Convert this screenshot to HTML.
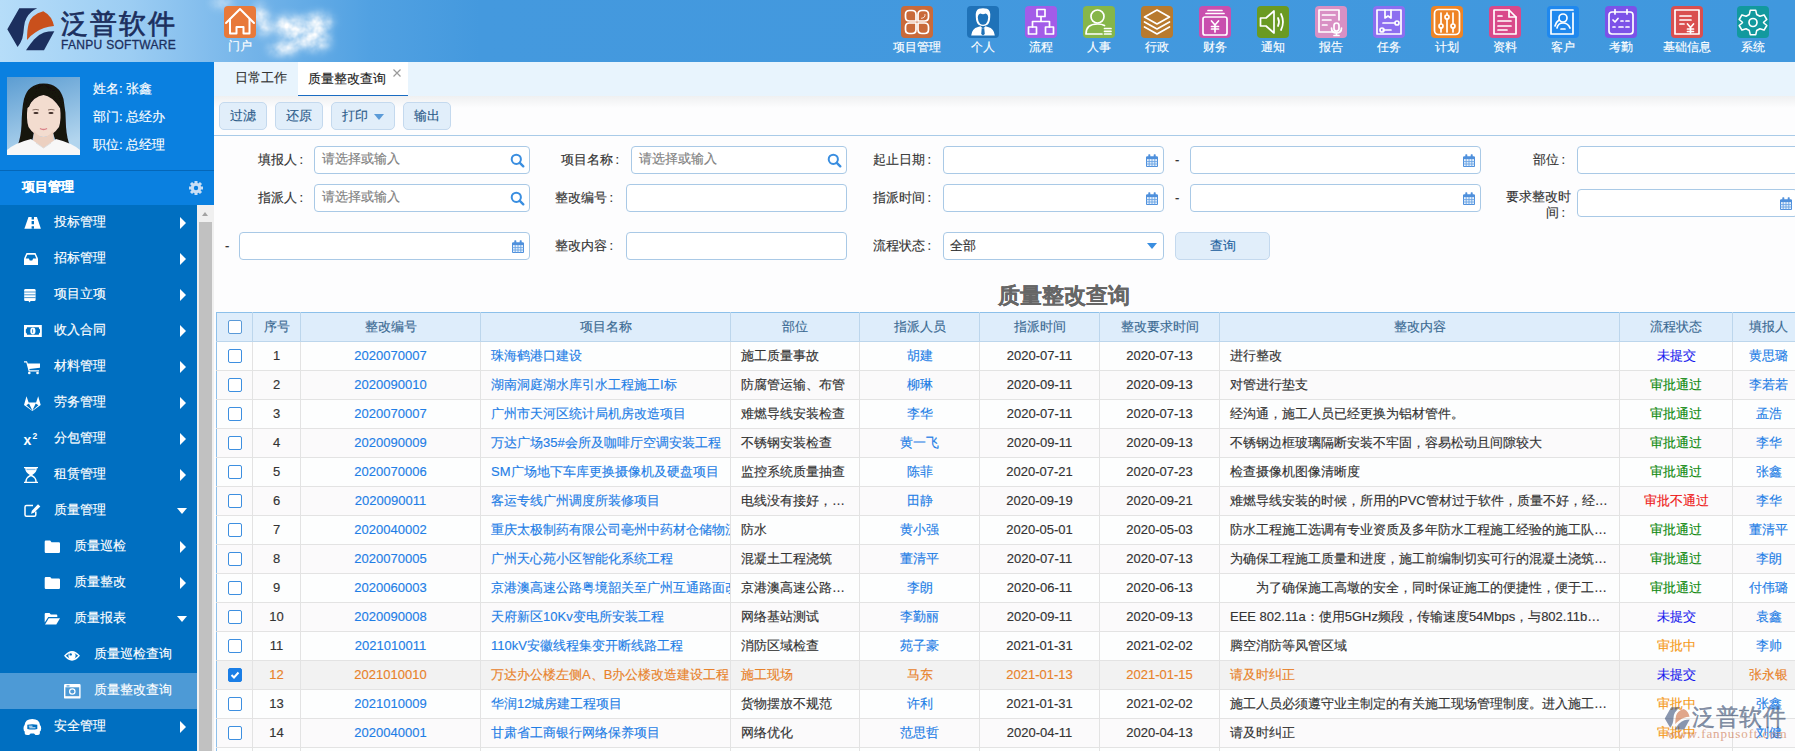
<!DOCTYPE html><html><head><meta charset="utf-8"><style>
*{box-sizing:border-box;margin:0;padding:0}
body{-webkit-text-stroke:0.15px currentColor}
html,body{width:1795px;height:751px;overflow:hidden;background:#fdfdfe;font-family:"Liberation Sans",sans-serif;font-size:13px;color:#333}
.a{position:absolute}
#hdr{left:0;top:0;width:1795px;height:62px;background:linear-gradient(90deg,#b6ddf9 0px,#9ccdf3 130px,#74b4e9 250px,#51a1e2 370px,#4499de 480px,#4098de 1795px)}
.nav{top:0;height:62px;text-align:center;color:#fff;font-size:12px}
.ico{position:absolute;top:6px;width:32px;height:32px;border-radius:4px}
.ico svg{position:absolute;left:0;top:0}
.nl{position:absolute;top:39px;white-space:nowrap;font-size:12px;line-height:16px;color:#fff;transform:translateX(-50%)}
#side{left:0;top:62px;width:214px;height:689px;background:#0a80e0}
.mi{position:absolute;left:0;width:197px;height:36px;color:#fff;font-size:13px;line-height:34px}
.mi .t{position:absolute;top:0}
.mi .ar{position:absolute;left:180px;top:12px;width:0;height:0;border-top:6px solid transparent;border-bottom:6px solid transparent;border-left:6px solid #fff}
.mi .dn{position:absolute;left:177px;top:15px;width:0;height:0;border-left:5px solid transparent;border-right:5px solid transparent;border-top:6px solid #fff}
.inp{position:absolute;height:28px;border:1px solid #a9c9e6;border-radius:4px;background:#fff}
.lbl{position:absolute;white-space:nowrap;font-size:13px;color:#333;line-height:28px;text-align:right}
.ph{position:absolute;left:6.5px;top:-1px;line-height:26px;color:#7f7f7f;font-size:13px}
.btn{position:absolute;top:102px;height:28px;border:1px solid #c4d9ee;border-radius:5px;background:#e1eefa;color:#2d5c8a;text-align:center;line-height:26px;font-size:13px}
table{border-collapse:collapse;table-layout:fixed}
#tbl{position:absolute;left:216px;top:312px;width:1588px;border-left:1px solid #8ec0ea}
#tbl td{background:#fdfefe}
#tbl tr:nth-child(odd) td{background:#fbfafb}
#tbl tr.sel td{background:#f2f2f2;color:#e8822a}
#tbl td:first-child,#tbl th:first-child{border-left-color:#8ec0ea}
#tbl td.pn{text-overflow:clip;padding-right:0}
#tbl td,#tbl th{height:29px;border:1px solid #e3e3e3;text-align:center;font-size:13px;white-space:nowrap;overflow:hidden;text-overflow:ellipsis;font-weight:normal;padding:0 10px 1px}
#tbl th{background:#deedfb;color:#3b6a93;border-color:#bcd6ec;border-top:1px solid #8cc0ea}
#tbl td.l{text-align:left}
.cb{display:inline-block;width:14px;height:14px;border:1px solid #3d8fe0;border-radius:2px;background:#fff;vertical-align:middle;position:relative;top:-1px}
.lk{color:#1f7ee6}
</style></head><body>
<div id="hdr" class="a">
<svg class="a" style="left:0;top:0" width="60" height="62" viewBox="0 0 60 62">
<path d="M19.3 8.3 L37.3 8.3 Q30 11.5 26.5 18 Q24.3 22 24 27 Q23.5 34 22.3 38.5 Q20.5 43.5 17.6 47 L7.3 29.3 Z" fill="#1c2f5e"/>
<path d="M27 40 Q27 30 28.6 24 Q30 19 33 16.5 Q37.5 12.5 43.3 11.3 Q48.5 14 51 18 Q53 21.5 54 26 Q48.5 26.3 44 28 Q39 29.8 35.3 32.5 Q30.5 35.5 27 40 Z" fill="#c9501c"/>
<path d="M26 50.3 Q30 44 34 39.5 Q38.5 34.5 44 32.6 Q48 31.3 54.3 31.3 L44 50.3 Z" fill="#1c2f5e"/>
</svg>
<div class="a" style="left:61px;top:6px;font-size:27px;line-height:36px;color:#1c2f5e;letter-spacing:2px;font-weight:normal;-webkit-text-stroke:0.7px #1c2f5e">泛普软件</div>
<div class="a" style="left:61px;top:39px;font-size:12px;line-height:13px;color:#1c2f5e;letter-spacing:0.3px;font-weight:normal;-webkit-text-stroke:0.3px #1c2f5e">FANPU SOFTWARE</div>
<svg class="a" style="left:205px;top:0" width="140" height="62" viewBox="205 0 140 62"><defs>
<filter id="bl" x="-50%" y="-50%" width="200%" height="200%"><feTurbulence type="fractalNoise" baseFrequency="0.09" numOctaves="3" seed="11" result="n0"/><feGaussianBlur in="n0" stdDeviation="0.6" result="n1"/><feColorMatrix in="n1" type="matrix" values="0 0 0 0 0  0 0 0 0 0  0 0 0 0 0  1 0 0 0 0" result="n"/><feGaussianBlur in="SourceGraphic" stdDeviation="4" result="b"/><feComposite in="n" in2="b" operator="arithmetic" k1="1.0" k2="0" k3="0.22" k4="0" result="m"/><feColorMatrix in="m" type="matrix" values="0 0 0 0 1  0 0 0 0 1  0 0 0 0 1  0 0 0 1 0"/></filter></defs>
<g filter="url(#bl)" fill="#fff">
<ellipse cx="262" cy="20" rx="7" ry="17" transform="rotate(-15 262 20)"/>
<ellipse cx="222" cy="3" rx="10" ry="5" opacity="0.7"/>
<ellipse cx="302" cy="33" rx="30" ry="14" transform="rotate(22 302 33)"/>
<ellipse cx="318" cy="22" rx="15" ry="9"/>
<ellipse cx="283" cy="49" rx="15" ry="6"/>
</g></svg>
<div class="a" style="left:224px;top:6px;width:32px;height:32px;border-radius:4px;background:#e8793a"><svg width="32" height="32" viewBox="0 0 32 32" fill="none" stroke="#fff" stroke-width="2" stroke-linejoin="round" stroke-linecap="round"><path d="M2 17 L16 3 L30 17"/><path d="M6 13 V27.5 H12.5 V21 H19.5 V27.5 H25.5 V13"/></svg></div>
<div class="a" style="left:228px;top:38px;font-size:12px;line-height:16px;color:#fff">门户</div>
<div class="ico" style="left:901px;background:#c96a3a"><svg width="32" height="32" viewBox="0 0 32 32"><g fill="none" stroke="#fff" stroke-width="1.7" stroke-linecap="round" stroke-linejoin="round"><path d="M15 15H8.5Q4.5 15 4.5 11V8.5Q4.5 4.5 8.5 4.5H11Q15 4.5 15 8.5Z"/><path d="M17 15H23.5Q27.5 15 27.5 11V8.5Q27.5 4.5 23.5 4.5H21Q17 4.5 17 8.5Z"/><path d="M15 17H8.5Q4.5 17 4.5 21V23.5Q4.5 27.5 8.5 27.5H11Q15 27.5 15 23.5Z"/><path d="M17 17H23.5Q27.5 17 27.5 21V23.5Q27.5 27.5 23.5 27.5H21Q17 27.5 17 23.5Z"/><path d="M24 8.5Q24.5 12 20.5 12.3" stroke-width="0.8"/></g></svg></div>
<div class="nl" style="left:917px">项目管理</div>
<div class="ico" style="left:967px;background:#1f72b8"><svg width="32" height="32" viewBox="0 0 32 32"><g fill="#fff"><path d="M8.8 11 Q8.2 4 12 2.8 Q16 1.5 20 2.8 Q23.8 4 23.2 11 Q23 16.5 20.5 18.8 Q18 20 16 20 Q14 20 11.5 18.8 Q9 16.5 8.8 11Z"/><path d="M4.2 29.6 Q4.8 22.5 11 21 L13.5 20.3 L16 22.5 L18.5 20.3 L21 21 Q27.2 22.5 27.8 29.6Z"/></g><path d="M10.8 11.5 Q11 8 13.5 7.5 Q16 9 18.5 7.5 Q21 8 21.2 11.5 Q21 16 19 17.8 Q17.5 18.8 16 18.8 Q14.5 18.8 13 17.8 Q11 16 10.8 11.5Z" fill="#1f72b8"/><path d="M14.8 21.5 L16 22.8 L17.2 21.5 L17.8 28 L16 29.6 L14.2 28Z" fill="#1f72b8"/></svg></div>
<div class="nl" style="left:983px">个人</div>
<div class="ico" style="left:1025px;background:#a35ce8"><svg width="32" height="32" viewBox="0 0 32 32"><g fill="none" stroke="#fff" stroke-width="1.7" stroke-linecap="round" stroke-linejoin="round"><rect x="12" y="3.5" width="8" height="7"/><rect x="3.5" y="21" width="8" height="7"/><rect x="20.5" y="21" width="8" height="7"/><path d="M16 10.5V15.5M7.5 21V15.5H24.5V21"/></g></svg></div>
<div class="nl" style="left:1041px">流程</div>
<div class="ico" style="left:1083px;background:#86b64a"><svg width="32" height="32" viewBox="0 0 32 32"><g fill="none" stroke="#fff" stroke-width="1.7" stroke-linecap="round" stroke-linejoin="round"><circle cx="14.5" cy="10.5" r="6.5"/><path d="M3 28 Q3 18 14.5 18 Q19 18 21.5 19.5M3 28H19"/><path d="M21.5 22.5H28M21.5 25.3H28M21.5 28H28"/></g></svg></div>
<div class="nl" style="left:1099px">人事</div>
<div class="ico" style="left:1141px;background:#b87a2e"><svg width="32" height="32" viewBox="0 0 32 32"><g fill="none" stroke="#fff" stroke-width="1.7" stroke-linecap="round" stroke-linejoin="round"><path d="M16 4 L28.5 11 L16 18 L3.5 11Z"/><path d="M3.5 16 L16 23 L28.5 16"/><path d="M3.5 21 L16 28 L28.5 21"/></g></svg></div>
<div class="nl" style="left:1157px">行政</div>
<div class="ico" style="left:1199px;background:#c94fae"><svg width="32" height="32" viewBox="0 0 32 32"><g fill="none" stroke="#fff" stroke-width="1.7" stroke-linecap="round" stroke-linejoin="round"><rect x="4" y="11" width="24" height="18" rx="2"/><path d="M7 7.5H25M9 4.5H23"/><path d="M12.5 15L16 19L19.5 15M16 19V26M12.5 20.5H19.5M12.5 23H19.5"/></g></svg></div>
<div class="nl" style="left:1215px">财务</div>
<div class="ico" style="left:1257px;background:#6a9a22"><svg width="32" height="32" viewBox="0 0 32 32"><g fill="none" stroke="#fff" stroke-width="1.7" stroke-linecap="round" stroke-linejoin="round"><path d="M3.5 12H9L17 5V27L9 20H3.5Z"/><path d="M21 12Q23 16 21 20M24 8Q28 16 24 24"/></g></svg></div>
<div class="nl" style="left:1273px">通知</div>
<div class="ico" style="left:1315px;background:#d990c4"><svg width="32" height="32" viewBox="0 0 32 32"><g fill="none" stroke="#fff" stroke-width="1.7" stroke-linecap="round" stroke-linejoin="round"><path d="M22 26H4V4H24V14"/><path d="M7.5 9H20M7.5 14H16M7.5 19H12"/><rect x="19" y="17" width="5" height="8" rx="2.5"/><path d="M16.5 22Q16.5 27 21.5 27Q26.5 27 26.5 22M21.5 27V29.5M19 29.5H24"/></g></svg></div>
<div class="nl" style="left:1331px">报告</div>
<div class="ico" style="left:1373px;background:#8d6ff0"><svg width="32" height="32" viewBox="0 0 32 32"><g fill="none" stroke="#fff" stroke-width="1.7" stroke-linecap="round" stroke-linejoin="round"><rect x="4" y="4" width="24" height="24"/><path d="M12 4V12L15 10L18 12V4"/><path d="M10 17H22M10 24H18"/><circle cx="24" cy="17" r="2"/><circle cx="9" cy="24" r="2"/></g></svg></div>
<div class="nl" style="left:1389px">任务</div>
<div class="ico" style="left:1431px;background:#ee8426"><svg width="32" height="32" viewBox="0 0 32 32"><g fill="none" stroke="#fff" stroke-width="1.7" stroke-linecap="round" stroke-linejoin="round"><rect x="3.5" y="3.5" width="25" height="25" rx="4"/><path d="M10 7V26M16 7V26M22 7V26"/><circle cx="10" cy="20" r="2" fill="#ee8426"/><circle cx="16" cy="11" r="2" fill="#ee8426"/><circle cx="22" cy="20" r="2" fill="#ee8426"/></g></svg></div>
<div class="nl" style="left:1447px">计划</div>
<div class="ico" style="left:1489px;background:#d9498a"><svg width="32" height="32" viewBox="0 0 32 32"><g fill="none" stroke="#fff" stroke-width="1.7" stroke-linecap="round" stroke-linejoin="round"><path d="M5 4H20L27 11V28H5Z"/><path d="M20 4V11H27"/><path d="M9 10H13M9 15H22M9 20H22M9 24H18"/></g></svg></div>
<div class="nl" style="left:1505px">资料</div>
<div class="ico" style="left:1547px;background:#1f88ee"><svg width="32" height="32" viewBox="0 0 32 32"><g fill="none" stroke="#fff" stroke-width="1.7" stroke-linecap="round" stroke-linejoin="round"><path d="M26 4H4V28H26V7"/><circle cx="16" cy="12" r="4"/><path d="M10 22Q11 17 16 17Q21 17 23 22M12 14Q9 16 8 20M14 23H18"/></g></svg></div>
<div class="nl" style="left:1563px">客户</div>
<div class="ico" style="left:1605px;background:#7c52e8"><svg width="32" height="32" viewBox="0 0 32 32"><g fill="none" stroke="#fff" stroke-width="1.7" stroke-linecap="round" stroke-linejoin="round"><rect x="4" y="6" width="24" height="22" rx="3"/><path d="M10 3.5V8M22 3.5V8"/><path d="M8 14L10 16L13 12.5M16 15H18M21 15H24M8 21H10M14 21H18M21 21H24"/></g></svg></div>
<div class="nl" style="left:1621px">考勤</div>
<div class="ico" style="left:1671px;background:#d94f4f"><svg width="32" height="32" viewBox="0 0 32 32"><g fill="none" stroke="#fff" stroke-width="1.7" stroke-linecap="round" stroke-linejoin="round"><rect x="4" y="4" width="24" height="24"/><path d="M9 10H20M9 14H20M9 18H13"/><path d="M16.5 18L19.5 21.5L22.5 18M19.5 21.5V27M16.5 23H22.5M16.5 25.5H22.5"/></g></svg></div>
<div class="nl" style="left:1687px">基础信息</div>
<div class="ico" style="left:1737px;background:#12999e"><svg width="32" height="32" viewBox="0 0 32 32"><g fill="none" stroke="#fff" stroke-width="1.7" stroke-linecap="round" stroke-linejoin="round"><path d="M13 3.5H19L20 8L23.5 10L28 8.5L31 13.5L27.5 16.5V17L31 20L28 25L23.5 23.5L20 25.5L19 30H13L12 25.5L8.5 23.5L4 25L1 20L4.5 17V16.5L1 13.5L4 8.5L8.5 10L12 8Z" transform="translate(16 16.5) scale(0.92) translate(-16 -16.75)"/><circle cx="16" cy="16.5" r="4"/></g></svg></div>
<div class="nl" style="left:1753px">系统</div>
</div>
<div id="side" class="a">
<svg class="a" style="left:7px;top:15px" width="73" height="78" viewBox="0 0 73 78" preserveAspectRatio="none">
<defs><linearGradient id="pg" x1="0" y1="0" x2="0.3" y2="1"><stop offset="0" stop-color="#5c9dd2"/><stop offset="1" stop-color="#b2d5ee"/></linearGradient>
<filter id="pb" x="-10%" y="-10%" width="120%" height="120%"><feGaussianBlur stdDeviation="0.6"/></filter></defs>
<rect width="73" height="78" fill="url(#pg)"/>
<g filter="url(#pb)">
<path d="M36 6.5 Q52 6 56.5 22 Q59 35 59 50 Q60 62 63 69 L50 68 L46 56 L27 56 L24 68 L10.5 69 Q14 60 14.5 48 Q15 30 17 22 Q21 7 36 6.5Z" fill="#161210"/>
<path d="M36.5 18 Q45 19 53 31 Q54.5 42 52 50 Q46 59 36.5 60 Q27 59 21.5 50 Q19 42 20.5 31 Q27 19 36.5 18Z" fill="#f3dccf"/>
<path d="M36.3 7.5 Q30 10 22 30 L19 31 Q20 14 36.3 7.5Z M36.8 7.5 Q44 10 53 31 L55 31 Q53 14 36.8 7.5Z" fill="#161210"/>
<path d="M27 54 Q32 60 36.5 60 Q41 60 46 54 L47 64 L36.5 72 L26 64Z" fill="#ecd0c0"/>
<path d="M0 78 L0 73 Q8 66 24 62 L36.5 71 L49 62 Q65 66 73 73 L73 78Z" fill="#f7f7f7"/>
<path d="M29 66 L36.5 71 L44 66" fill="none" stroke="#d8d8d8" stroke-width="0.8"/>
<ellipse cx="29" cy="36" rx="2.6" ry="1.1" fill="#3a2a24"/><ellipse cx="44" cy="36" rx="2.6" ry="1.1" fill="#3a2a24"/>
<path d="M25.5 33 Q29 31.8 32 33 M41 33 Q44 31.8 47.5 33" stroke="#5a4034" stroke-width="0.7" fill="none"/>
<path d="M33 51.5 Q36.5 53.5 40 51.5" stroke="#d97f86" stroke-width="1.4" fill="none"/>
</g>
</svg>
<div class="a" style="left:93px;top:17px;color:#fff;font-size:13px;line-height:20px">姓名: 张鑫</div>
<div class="a" style="left:93px;top:45px;color:#fff;font-size:13px;line-height:20px">部门: 总经办</div>
<div class="a" style="left:93px;top:73px;color:#fff;font-size:13px;line-height:20px">职位: 总经理</div>
<div class="a" style="left:0;top:108px;width:214px;height:1px;background:#0567b8"></div>
<div class="a" style="left:22px;top:116px;color:#fff;font-size:13px;line-height:18px;font-weight:bold">项目管理</div>
<svg class="a" style="left:188px;top:118px" width="16" height="16" viewBox="0 0 16 16"><g fill="#c8def5"><circle cx="8" cy="8" r="5.2"/><g stroke="#c8def5" stroke-width="3">
<path d="M8 1V15M1 8H15M3 3L13 13M13 3L3 13"/></g></g><circle cx="8" cy="8" r="2.2" fill="#0a80e0"/></svg>
<div class="a" style="left:0;top:143px;width:197px;height:546px;background:#006fc1"></div>
<div class="a" style="left:197px;top:143px;width:17px;height:546px;background:#f0f0f0"></div>
<div class="a" style="left:201.5px;top:150px;width:0;height:0;border-left:3.5px solid transparent;border-right:3.5px solid transparent;border-bottom:4px solid #a3a3a3"></div>
<div class="a" style="left:199px;top:160px;width:13px;height:529px;background:#c1c1c1"></div>
<div class="mi" style="top:143px;"><span class="t" style="left:54px">投标管理</span>
<i class="ar"></i>
</div>
<div class="mi" style="top:179px;"><span class="t" style="left:54px">招标管理</span>
<i class="ar"></i>
</div>
<div class="mi" style="top:215px;"><span class="t" style="left:54px">项目立项</span>
<i class="ar"></i>
</div>
<div class="mi" style="top:251px;"><span class="t" style="left:54px">收入合同</span>
<i class="ar"></i>
</div>
<div class="mi" style="top:287px;"><span class="t" style="left:54px">材料管理</span>
<i class="ar"></i>
</div>
<div class="mi" style="top:323px;"><span class="t" style="left:54px">劳务管理</span>
<i class="ar"></i>
</div>
<div class="mi" style="top:359px;"><span class="t" style="left:54px">分包管理</span>
<i class="ar"></i>
</div>
<div class="mi" style="top:395px;"><span class="t" style="left:54px">租赁管理</span>
<i class="ar"></i>
</div>
<div class="mi" style="top:431px;"><span class="t" style="left:54px">质量管理</span>
<i class="dn"></i>
</div>
<div class="mi" style="top:467px;"><span class="t" style="left:74px">质量巡检</span>
<i class="ar"></i>
</div>
<div class="mi" style="top:503px;"><span class="t" style="left:74px">质量整改</span>
<i class="ar"></i>
</div>
<div class="mi" style="top:539px;"><span class="t" style="left:74px">质量报表</span>
<i class="dn"></i>
</div>
<div class="mi" style="top:575px;"><span class="t" style="left:94px">质量巡检查询</span>
</div>
<div class="mi" style="top:611px;background:#4d9ad6;"><span class="t" style="left:94px">质量整改查询</span>
</div>
<div class="mi" style="top:647px;"><span class="t" style="left:54px">安全管理</span>
<i class="ar"></i>
</div>
<svg class="a" style="left:0;top:-62px" width="197" height="813" viewBox="0 0 197 813"><path d="M28.5 217H36.9L40.9 228.7H24.4Z" fill="#fff"/><path d="M31.6 217H34V219.5H31.6ZM31.6 221H34V224.3H31.6ZM31.6 226.3H34V228.7H31.6Z" fill="#0070c1"/><path d="M26.5 253H35.5L38 258.5V265H24V258.5Z" fill="#fff"/><path d="M27.3 254.8H34.7L36.3 258.6H33.2L32.2 260.5H29.8L28.8 258.6H25.7Z" fill="#0070c1"/><rect x="24.2" y="289" width="11.4" height="12" rx="1.3" fill="#fff"/><path d="M24.2 292H35.6M24.2 294.8H35.6M24.2 297.6H35.6" stroke="#0070c1" stroke-width="0.7"/><path d="M28.5 300.8H31L29.2 302.6Z" fill="#fff"/><rect x="24" y="325" width="17.8" height="12" fill="#fff"/><path d="M27 327.2H38.8Q38.8 329 40 329.5V332.5Q38.8 333 38.8 334.8H27Q27 333 25.8 332.5V329.5Q27 329 27 327.2Z" fill="#0070c1"/><ellipse cx="32.9" cy="331" rx="2.6" ry="3.4" fill="#fff"/><path d="M32.6 329.3V332.8" stroke="#0070c1" stroke-width="0.8"/><path d="M24 361.3H27L27.8 363.5H40V367.8L29.3 369L29.7 370.3H39V371.5H28.7L26.3 362.5H24Z" fill="#fff"/><circle cx="29.3" cy="373" r="1.3" fill="#fff"/><circle cx="37.5" cy="373" r="1.3" fill="#fff"/><path d="M24 405L26.5 396.3L28.6 402.5H36.1L38.2 396.3L40.7 405L32.35 411Z" fill="#fff"/><path d="M26.3 405.3L29 403.6L32.35 410.5ZM38.4 405.3L35.7 403.6L32.35 410.5Z" fill="#0070c1"/><text x="23.5" y="445" font-family="Liberation Sans" font-weight="bold" font-size="14" fill="#fff">x</text><text x="32.5" y="439" font-family="Liberation Sans" font-weight="bold" font-size="8.5" fill="#fff">2</text><path d="M24 467H38V468.3H36.8Q36.8 472.5 32.2 475Q36.8 477.5 36.8 481.7H38V483H24V481.7H25.2Q25.2 477.5 29.8 475Q25.2 472.5 25.2 468.3H24Z" fill="#fff"/><path d="M26.7 481.7Q26.7 477.8 31 476.3Q35.3 477.8 35.3 481.7Z" fill="#0070c1"/><rect x="26.5" y="468.8" width="9" height="1.3" fill="#8cc0ea"/><path d="M33 505.5H26.5Q25 505.5 25 507V514.8Q25 516.3 26.5 516.3H34.3Q35.8 516.3 35.8 514.8V511.5" fill="none" stroke="#fff" stroke-width="1.5"/><path d="M38 504.2L40.3 506.5L34 512.8L31 513.7L31.9 510.7Z" fill="#fff"/><path d="M44.7 541.8Q44.7 540.6 45.9 540.6H50.2L51.5 542.2H58.8Q60 542.2 60 543.4V551.8Q60 553 58.8 553H45.9Q44.7 553 44.7 551.8Z" fill="#fff"/><path d="M44.7 578.2Q44.7 577 45.9 577H50.2L51.5 578.6H58.8Q60 578.6 60 579.8V587.8Q60 589 58.8 589H45.9Q44.7 589 44.7 587.8Z" fill="#fff"/><path d="M44.7 614Q44.7 613 45.7 613H49.5L50.8 614.5H56.3Q57.3 614.5 57.3 615.5V617H48.3L44.7 622.5Z" fill="#fff"/><path d="M48.8 618.2H60L56.3 624.4H45Z" fill="#fff"/><path d="M64 655.75Q72 646 80 655.75Q72 665.5 64 655.75Z" fill="#fff"/><path d="M65.8 655.75Q72 649.5 78.2 655.75Q72 662 65.8 655.75Z" fill="#0070c1"/><circle cx="72" cy="655.75" r="3.6" fill="#fff"/><circle cx="70.7" cy="654.4" r="1.2" fill="#0070c1"/><rect x="64.7" y="684.7" width="15.2" height="13.2" rx="0.5" fill="none" stroke="#fff" stroke-width="1.4"/><rect x="64.7" y="684.7" width="15.2" height="2.6" fill="#fff"/><rect x="66.5" y="685.3" width="3" height="1.2" fill="#4d9ad6"/><rect x="64.7" y="696.2" width="15.2" height="1.7" fill="#fff"/><circle cx="72.3" cy="691.5" r="2.7" fill="none" stroke="#fff" stroke-width="1.2"/><path d="M32.3 719Q39.5 719 40 725Q41.3 726 41.2 728.5Q41 731 39.8 731.5Q40.5 735 37.5 735H35.5L34 733.6H30.6L29.1 735H27.1Q24.1 735 24.8 731.5Q23.6 731 23.5 728.5Q23.4 726 24.6 725Q25.1 719 32.3 719Z" fill="#fff"/><path d="M27.3 724.8Q32.3 723.8 37.3 724.8V729Q32.3 730 27.3 729Z" fill="#0070c1"/><path d="M28.8 726.2H32.5M29.3 727.8H35.5" stroke="#fff" stroke-width="0.9"/></svg>
</div>
<div class="a" style="left:214px;top:62px;width:1581px;height:34px;background:#e8f4fd"></div>
<div class="a" style="left:298px;top:62px;width:110px;height:34px;background:#fff;border-bottom:1px solid #1a6cc2"></div>
<div class="a" style="left:235px;top:69px;font-size:13px;line-height:18px;color:#333">日常工作</div>
<div class="a" style="left:308px;top:69.5px;font-size:13px;line-height:18px;color:#222">质量整改查询</div>
<svg class="a" style="left:392px;top:68px" width="10" height="10" viewBox="0 0 10 10"><path d="M1.5 1.5L8.5 8.5M8.5 1.5L1.5 8.5" stroke="#9a9a9a" stroke-width="1.2"/></svg>
<div class="a" style="left:214px;top:96px;width:1581px;height:39px;background:linear-gradient(#eff0f1,#fdfdfe 12px,#fdfdfe)"></div>
<div class="a" style="left:214px;top:135px;width:1581px;height:1px;background:#a9cbe8"></div>
<div class="btn" style="left:219px;width:48px">过滤</div>
<div class="btn" style="left:275px;width:48px">还原</div>
<div class="btn" style="left:331px;width:64px;text-align:left;padding-left:10px">打印<i class="a" style="left:42px;top:11px;width:0;height:0;border-left:5px solid transparent;border-right:5px solid transparent;border-top:6px solid #5b9bd8"></i></div>
<div class="btn" style="left:403px;width:48px">输出</div>
<div class="lbl" style="right:1492px;top:146px">填报人<span style="margin-left:2px">:</span></div>
<div class="inp" style="left:314px;top:146px;width:216px"><span class="ph">请选择或输入</span><svg class="a" style="right:4px;top:6px" width="15" height="15" viewBox="0 0 15 15"><circle cx="6.3" cy="6.3" r="4.6" fill="none" stroke="#3a8ee0" stroke-width="2"/><path d="M9.8 9.8L13.3 13.3" stroke="#3a8ee0" stroke-width="2.4" stroke-linecap="round"/></svg></div>
<div class="lbl" style="right:1176px;top:146px">项目名称<span style="margin-left:2px">:</span></div>
<div class="inp" style="left:631px;top:146px;width:216px"><span class="ph">请选择或输入</span><svg class="a" style="right:4px;top:6px" width="15" height="15" viewBox="0 0 15 15"><circle cx="6.3" cy="6.3" r="4.6" fill="none" stroke="#3a8ee0" stroke-width="2"/><path d="M9.8 9.8L13.3 13.3" stroke="#3a8ee0" stroke-width="2.4" stroke-linecap="round"/></svg></div>
<div class="lbl" style="right:864px;top:146px">起止日期<span style="margin-left:2px">:</span></div>
<div class="inp" style="left:943px;top:146px;width:221px"><svg class="a" style="right:5px;top:7px" width="12" height="13" viewBox="0 0 12 13"><path d="M0.5 3H11.5V12.5H0.5Z" fill="#e6f0fb" stroke="#4f90dc"/><rect x="0.5" y="2.5" width="11" height="2.6" fill="#4f90dc"/><rect x="2.3" y="0.3" width="2" height="3" rx="0.6" fill="#4f90dc"/><rect x="7.7" y="0.3" width="2" height="3" rx="0.6" fill="#4f90dc"/><path d="M0.5 7.6H11.5M0.5 10H11.5M3.2 5V12.5M6 5V12.5M8.8 5V12.5" stroke="#6aa4e4" stroke-width="0.9"/></svg></div>
<div class="a" style="left:1175px;top:146px;line-height:28px">-</div>
<div class="inp" style="left:1190px;top:146px;width:291px"><svg class="a" style="right:5px;top:7px" width="12" height="13" viewBox="0 0 12 13"><path d="M0.5 3H11.5V12.5H0.5Z" fill="#e6f0fb" stroke="#4f90dc"/><rect x="0.5" y="2.5" width="11" height="2.6" fill="#4f90dc"/><rect x="2.3" y="0.3" width="2" height="3" rx="0.6" fill="#4f90dc"/><rect x="7.7" y="0.3" width="2" height="3" rx="0.6" fill="#4f90dc"/><path d="M0.5 7.6H11.5M0.5 10H11.5M3.2 5V12.5M6 5V12.5M8.8 5V12.5" stroke="#6aa4e4" stroke-width="0.9"/></svg></div>
<div class="lbl" style="right:230px;top:146px">部位<span style="margin-left:2px">:</span></div>
<div class="inp" style="left:1577px;top:146px;width:230px"></div>
<div class="lbl" style="right:1492px;top:184px">指派人<span style="margin-left:2px">:</span></div>
<div class="inp" style="left:314px;top:184px;width:216px"><span class="ph">请选择或输入</span><svg class="a" style="right:4px;top:6px" width="15" height="15" viewBox="0 0 15 15"><circle cx="6.3" cy="6.3" r="4.6" fill="none" stroke="#3a8ee0" stroke-width="2"/><path d="M9.8 9.8L13.3 13.3" stroke="#3a8ee0" stroke-width="2.4" stroke-linecap="round"/></svg></div>
<div class="lbl" style="right:1182px;top:184px">整改编号<span style="margin-left:2px">:</span></div>
<div class="inp" style="left:626px;top:184px;width:221px"></div>
<div class="lbl" style="right:864px;top:184px">指派时间<span style="margin-left:2px">:</span></div>
<div class="inp" style="left:943px;top:184px;width:221px"><svg class="a" style="right:5px;top:7px" width="12" height="13" viewBox="0 0 12 13"><path d="M0.5 3H11.5V12.5H0.5Z" fill="#e6f0fb" stroke="#4f90dc"/><rect x="0.5" y="2.5" width="11" height="2.6" fill="#4f90dc"/><rect x="2.3" y="0.3" width="2" height="3" rx="0.6" fill="#4f90dc"/><rect x="7.7" y="0.3" width="2" height="3" rx="0.6" fill="#4f90dc"/><path d="M0.5 7.6H11.5M0.5 10H11.5M3.2 5V12.5M6 5V12.5M8.8 5V12.5" stroke="#6aa4e4" stroke-width="0.9"/></svg></div>
<div class="a" style="left:1175px;top:184px;line-height:28px">-</div>
<div class="inp" style="left:1190px;top:184px;width:291px"><svg class="a" style="right:5px;top:7px" width="12" height="13" viewBox="0 0 12 13"><path d="M0.5 3H11.5V12.5H0.5Z" fill="#e6f0fb" stroke="#4f90dc"/><rect x="0.5" y="2.5" width="11" height="2.6" fill="#4f90dc"/><rect x="2.3" y="0.3" width="2" height="3" rx="0.6" fill="#4f90dc"/><rect x="7.7" y="0.3" width="2" height="3" rx="0.6" fill="#4f90dc"/><path d="M0.5 7.6H11.5M0.5 10H11.5M3.2 5V12.5M6 5V12.5M8.8 5V12.5" stroke="#6aa4e4" stroke-width="0.9"/></svg></div>
<div class="a" style="left:1506px;top:189px;line-height:16px;font-size:13px;color:#333">要求整改时</div>
<div class="a" style="right:230px;top:205px;line-height:16px;font-size:13px;color:#333">间<span style="margin-left:2px">:</span></div>
<div class="inp" style="left:1577px;top:189px;width:221px"><svg class="a" style="right:5px;top:7px" width="12" height="13" viewBox="0 0 12 13"><path d="M0.5 3H11.5V12.5H0.5Z" fill="#e6f0fb" stroke="#4f90dc"/><rect x="0.5" y="2.5" width="11" height="2.6" fill="#4f90dc"/><rect x="2.3" y="0.3" width="2" height="3" rx="0.6" fill="#4f90dc"/><rect x="7.7" y="0.3" width="2" height="3" rx="0.6" fill="#4f90dc"/><path d="M0.5 7.6H11.5M0.5 10H11.5M3.2 5V12.5M6 5V12.5M8.8 5V12.5" stroke="#6aa4e4" stroke-width="0.9"/></svg></div>
<div class="a" style="left:225px;top:232px;line-height:28px">-</div>
<div class="inp" style="left:239px;top:232px;width:291px"><svg class="a" style="right:5px;top:7px" width="12" height="13" viewBox="0 0 12 13"><path d="M0.5 3H11.5V12.5H0.5Z" fill="#e6f0fb" stroke="#4f90dc"/><rect x="0.5" y="2.5" width="11" height="2.6" fill="#4f90dc"/><rect x="2.3" y="0.3" width="2" height="3" rx="0.6" fill="#4f90dc"/><rect x="7.7" y="0.3" width="2" height="3" rx="0.6" fill="#4f90dc"/><path d="M0.5 7.6H11.5M0.5 10H11.5M3.2 5V12.5M6 5V12.5M8.8 5V12.5" stroke="#6aa4e4" stroke-width="0.9"/></svg></div>
<div class="lbl" style="right:1182px;top:232px">整改内容<span style="margin-left:2px">:</span></div>
<div class="inp" style="left:626px;top:232px;width:221px"></div>
<div class="lbl" style="right:864px;top:232px">流程状态<span style="margin-left:2px">:</span></div>
<div class="inp" style="left:943px;top:232px;width:221px"><span class="a" style="left:6px;top:0;line-height:26px;color:#333">全部</span><i class="a" style="left:203px;top:10px;width:0;height:0;border-left:5px solid transparent;border-right:5px solid transparent;border-top:6px solid #3a8ee0"></i></div>
<div class="btn" style="left:1175px;top:232px;width:95px;height:28px;line-height:26px;color:#2563a0">查询</div>
<div class="a" style="left:998px;top:283px;font-size:22px;line-height:26px;font-weight:bold;color:#666">质量整改查询</div>
<table id="tbl"><colgroup><col style="width:36px"><col style="width:48px"><col style="width:180px"><col style="width:250px"><col style="width:129px"><col style="width:120px"><col style="width:120px"><col style="width:120px"><col style="width:400px"><col style="width:113px"><col style="width:72px"></colgroup>
<tr><th style="padding:0"><span class="cb" style="border-color:#5a9ad8"></span></th><th>序号</th><th>整改编号</th><th>项目名称</th><th>部位</th><th>指派人员</th><th>指派时间</th><th>整改要求时间</th><th>整改内容</th><th>流程状态</th><th>填报人</th></tr>
<tr><td style="padding:0"><span class="cb"></span></td><td>1</td><td class="lk">2020070007</td><td class="l pn"><span class="lk">珠海鹤港口建设</span></td><td class="l">施工质量事故</td><td class="lk">胡建</td><td>2020-07-11</td><td>2020-07-13</td><td class="l">进行整改</td><td style="color:#1a1aee">未提交</td><td class="lk">黄思璐</td></tr>
<tr><td style="padding:0"><span class="cb"></span></td><td>2</td><td class="lk">2020090010</td><td class="l pn"><span class="lk">湖南洞庭湖水库引水工程施工I标</span></td><td class="l">防腐管运输、布管</td><td class="lk">柳琳</td><td>2020-09-11</td><td>2020-09-13</td><td class="l">对管进行垫支</td><td style="color:#108a10">审批通过</td><td class="lk">李若若</td></tr>
<tr><td style="padding:0"><span class="cb"></span></td><td>3</td><td class="lk">2020070007</td><td class="l pn"><span class="lk">广州市天河区统计局机房改造项目</span></td><td class="l">难燃导线安装检查</td><td class="lk">李华</td><td>2020-07-11</td><td>2020-07-13</td><td class="l">经沟通，施工人员已经更换为铝材管件。</td><td style="color:#108a10">审批通过</td><td class="lk">孟浩</td></tr>
<tr><td style="padding:0"><span class="cb"></span></td><td>4</td><td class="lk">2020090009</td><td class="l pn"><span class="lk">万达广场35#会所及咖啡厅空调安装工程</span></td><td class="l">不锈钢安装检查</td><td class="lk">黄一飞</td><td>2020-09-11</td><td>2020-09-13</td><td class="l">不锈钢边框玻璃隔断安装不牢固，容易松动且间隙较大</td><td style="color:#108a10">审批通过</td><td class="lk">李华</td></tr>
<tr><td style="padding:0"><span class="cb"></span></td><td>5</td><td class="lk">2020070006</td><td class="l pn"><span class="lk">SM广场地下车库更换摄像机及硬盘项目</span></td><td class="l">监控系统质量抽查</td><td class="lk">陈菲</td><td>2020-07-21</td><td>2020-07-23</td><td class="l">检查摄像机图像清晰度</td><td style="color:#108a10">审批通过</td><td class="lk">张鑫</td></tr>
<tr><td style="padding:0"><span class="cb"></span></td><td>6</td><td class="lk">2020090011</td><td class="l pn"><span class="lk">客运专线广州调度所装修项目</span></td><td class="l">电线没有接好，不规范</td><td class="lk">田静</td><td>2020-09-19</td><td>2020-09-21</td><td class="l">难燃导线安装的时候，所用的PVC管材过于软件，质量不好，经过检查</td><td style="color:#ee1a1a">审批不通过</td><td class="lk">李华</td></tr>
<tr><td style="padding:0"><span class="cb"></span></td><td>7</td><td class="lk">2020040002</td><td class="l pn"><span class="lk">重庆太极制药有限公司亳州中药材仓储物流</span></td><td class="l">防水</td><td class="lk">黄小强</td><td>2020-05-01</td><td>2020-05-03</td><td class="l">防水工程施工选调有专业资质及多年防水工程施工经验的施工队伍进行施工</td><td style="color:#108a10">审批通过</td><td class="lk">董清平</td></tr>
<tr><td style="padding:0"><span class="cb"></span></td><td>8</td><td class="lk">2020070005</td><td class="l pn"><span class="lk">广州天心苑小区智能化系统工程</span></td><td class="l">混凝土工程浇筑</td><td class="lk">董清平</td><td>2020-07-11</td><td>2020-07-13</td><td class="l">为确保工程施工质量和进度，施工前编制切实可行的混凝土浇筑方案</td><td style="color:#108a10">审批通过</td><td class="lk">李朗</td></tr>
<tr><td style="padding:0"><span class="cb"></span></td><td>9</td><td class="lk">2020060003</td><td class="l pn"><span class="lk">京港澳高速公路粤境韶关至广州互通路面改造</span></td><td class="l">京港澳高速公路粤境</td><td class="lk">李朗</td><td>2020-06-11</td><td>2020-06-13</td><td class="l">　　为了确保施工高墩的安全，同时保证施工的便捷性，便于工人操作</td><td style="color:#108a10">审批通过</td><td class="lk">付伟璐</td></tr>
<tr><td style="padding:0"><span class="cb"></span></td><td>10</td><td class="lk">2020090008</td><td class="l pn"><span class="lk">天府新区10Kv变电所安装工程</span></td><td class="l">网络基站测试</td><td class="lk">李勤丽</td><td>2020-09-11</td><td>2020-09-13</td><td class="l">EEE 802.11a：使用5GHz频段，传输速度54Mbps，与802.11b不兼容</td><td style="color:#1a1aee">未提交</td><td class="lk">袁鑫</td></tr>
<tr><td style="padding:0"><span class="cb"></span></td><td>11</td><td class="lk">2021010011</td><td class="l pn"><span class="lk">110kV安徽线程集变开断线路工程</span></td><td class="l">消防区域检查</td><td class="lk">苑子豪</td><td>2021-01-31</td><td>2021-02-02</td><td class="l">腾空消防等风管区域</td><td style="color:#f59a1a">审批中</td><td class="lk">李帅</td></tr>
<tr class="sel"><td style="padding:0"><span class="cb" style="background:#1a7ee6;border-color:#1a7ee6"><svg class="a" style="left:1px;top:1px" width="10" height="10" viewBox="0 0 10 10"><path d="M1.5 5L4 7.5L8.5 2.5" fill="none" stroke="#fff" stroke-width="2"/></svg></span></td><td>12</td><td>2021010010</td><td class="l pn"><span>万达办公楼左侧A、B办公楼改造建设工程</span></td><td class="l">施工现场</td><td>马东</td><td>2021-01-13</td><td>2021-01-15</td><td class="l">请及时纠正</td><td style="color:#1a1aee">未提交</td><td>张永银</td></tr>
<tr><td style="padding:0"><span class="cb"></span></td><td>13</td><td class="lk">2021010009</td><td class="l pn"><span class="lk">华润12城房建工程项目</span></td><td class="l">货物摆放不规范</td><td class="lk">许利</td><td>2021-01-31</td><td>2021-02-02</td><td class="l">施工人员必须遵守业主制定的有关施工现场管理制度。进入施工现场</td><td style="color:#f59a1a">审批中</td><td class="lk">张鑫</td></tr>
<tr><td style="padding:0"><span class="cb"></span></td><td>14</td><td class="lk">2020040001</td><td class="l pn"><span class="lk">甘肃省工商银行网络保养项目</span></td><td class="l">网络优化</td><td class="lk">范思哲</td><td>2020-04-11</td><td>2020-04-13</td><td class="l">请及时纠正</td><td style="color:#f59a1a">审批中</td><td class="lk">刘健</td></tr>
<tr><td style="padding:0"><span class="cb"></span></td><td>15</td><td class="lk">2020040003</td><td class="l pn"><span class="lk">甘肃省工商银行网络保养项目</span></td><td class="l">网络优化</td><td class="lk">范思哲</td><td>2020-04-11</td><td>2020-04-13</td><td class="l">请及时纠正</td><td style="color:#f59a1a">审批中</td><td class="lk">刘健</td></tr>
</table>
<svg class="a" style="left:1663px;top:705px" width="27.6" height="25.5" viewBox="4 4 52 48"><g opacity="0.55">
<path d="M19.3 8.3 L37.3 8.3 Q30 11.5 26.5 18 Q24.3 22 24 27 Q23.5 34 22.3 38.5 Q20.5 43.5 17.6 47 L7.3 29.3 Z" fill="#2c4470"/>
<path d="M27 40 Q27 30 28.6 24 Q30 19 33 16.5 Q37.5 12.5 43.3 11.3 Q48.5 14 51 18 Q53 21.5 54 26 Q48.5 26.3 44 28 Q39 29.8 35.3 32.5 Q30.5 35.5 27 40 Z" fill="#c9602c"/>
<path d="M26 50.3 Q30 44 34 39.5 Q38.5 34.5 44 32.6 Q48 31.3 54.3 31.3 L44 50.3 Z" fill="#2c4470"/></g></svg>
<div class="a" style="left:1692px;top:702px;font-size:23px;line-height:30px;color:rgba(60,80,115,0.6);letter-spacing:0.5px;-webkit-text-stroke:0.5px rgba(60,80,115,0.6)">泛普软件</div>
<div class="a" style="left:1667px;top:727px;font-family:'Liberation Serif',serif;font-size:13px;line-height:14px;color:rgba(205,120,80,0.6);letter-spacing:0.9px">www.fanpusoft.com</div>
</body></html>
